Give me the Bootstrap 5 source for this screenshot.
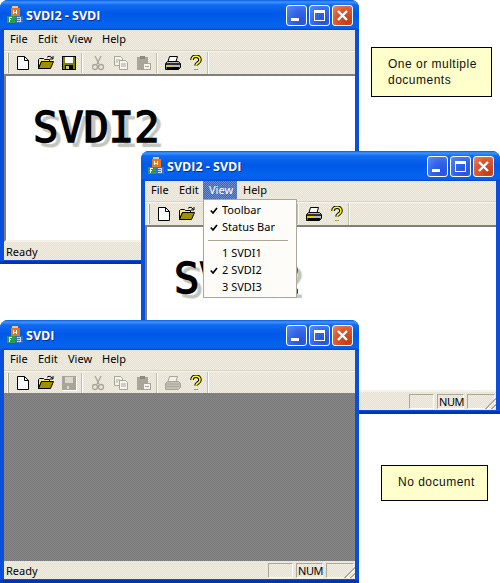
<!DOCTYPE html>
<html lang="en">
<head>
    <meta charset="UTF-8">
    <meta name="viewport" content="width=device-width, initial-scale=1.0">
    <title>SVDI</title>
    <link href="https://cdn.jsdelivr.net/npm/bootstrap@5.3.0/dist/css/bootstrap.min.css" rel="stylesheet">
    <style>
        body { background: #fff; margin: 0; font-family: "Noto Sans", "DejaVu Sans", sans-serif; font-size: 11px; color: #000; overflow: hidden; }
        .desk { width: 500px; height: 583px; }

        /* windows sit on a free canvas */
        .xp-win { width: 359px; height: 264px; background: #0a4fdc; border-radius: 8px 8px 0 0; box-shadow: inset 0 -3px 0 #0034b0; }
        .win-a { left: 0; top: 0; }
        .win-b { left: 141px; top: 151px; height: 263px; }
        .win-c { left: 0; top: 320px; height: 263px; }

        .xp-title { height: 30px; padding: 0 6px 0 6px; border-radius: 8px 8px 0 0; color: #fff;
            background: linear-gradient(180deg, #0a58e0 0, #3d95ff 2px, #0f6af0 5px, #0058e8 14px, #0263ee 24px, #0a5fe6 28px, #0046d0 30px); }
        .xp-title-text { font-family: "Open Sans", sans-serif; font-weight: 700; font-size: 12.5px; margin-left: 2px; padding-top: 2px; text-shadow: 1px 1px 0 #0a2f9c; }
        .cap-btn { width: 21px; height: 21px; margin-left: 2px; border: 1px solid #fff; border-radius: 3px;
            background: radial-gradient(circle at 75% 80%, #2a52d8, #2f63e8 45%, #5d8cf0 100%); }
        .cap-close { background: radial-gradient(circle at 75% 80%, #c43a12, #dc5a32 60%, #ea8a68 100%); }
        .cap-btn svg { display: block; }

        .xp-body { flex: 1 1 auto; min-height: 0; margin: 0 4px 4px; }
        .xp-face { background: repeating-conic-gradient(#e6e2d1 0 25%, #f0ede0 0 50%) 0 0 / 2px 2px; }
        .xp-menu { height: 20px; font-family: "Noto Sans", sans-serif; }
        .xp-menu span { padding: 0 6px; height: 20px; line-height: 18px; }
        .m-file { width: 28px; } .m-edit { width: 30px; } .m-view { width: 34px; }
        .xp-menu span.m-open { color: #fff; background: repeating-conic-gradient(#2f66c4 0 25%, #6f90d0 0 50%) 0 0 / 2px 2px; }
        .xp-rule { height: 2px; background: #f8f6ee; border-top: 1px solid #d6d2c2; }

        .xp-tools { height: 22px; padding-left: 3px; }
        .grip { width: 2px; height: 20px; margin-right: 2px; background: #fff; border-right: 1px solid #aca899; }
        .tool { width: 23px; height: 22px; }
        .tool-sep { width: 6px; height: 20px; position: relative; }
        .tool-sep::after { content: ""; display: block; width: 2px; height: 20px; margin-left: 1px; background: #c4c0b0; border-right: 1px solid #fff; }
        .tools-end { width: 2px; height: 22px; background: #c4c0b0; border-right: 1px solid #fff; }
        .tool-off { color: #a8a698; }

        .xp-client { flex: 1 1 auto; min-height: 0; background: #fff; border-top: 2px solid #808078; border-left: 2px solid #808078; border-bottom: 2px solid #f4f2e8; }
        .xp-mdi { flex: 1 1 auto; min-height: 0; margin-top: -1px; background: repeating-conic-gradient(#7a7a7a 0 25%, #868686 0 50%) 0 0 / 2px 2px; }
        .doc-word { left: 27px; top: 28px; font-family: "DejaVu Sans Mono", monospace; font-size: 42px; line-height: 48px; -webkit-text-stroke: 1.4px #000; text-shadow: 5px 5px 1px #c4c4be; white-space: nowrap; }

        .xp-status { height: 18px; padding-left: 2px; }
        .status-text { padding-top: 2px; }
        .pane { height: 15px; margin-right: 3px; line-height: 13px; border: 1px solid; border-color: #aca899 #fff #fff #aca899; padding-left: 1px; }
        .pane-a { width: 25px; } .pane-b { width: 27px; letter-spacing: -.4px; } .pane-c { width: 28px; margin-right: 1px; }
        .size-grip { right: 0; bottom: 1px; width: 13px; height: 13px;
            background: repeating-linear-gradient(135deg, transparent 0 2px, #aca899 2px 3.4px, #fff 3.4px 4.2px); clip-path: polygon(100% 0, 100% 100%, 0 100%); }

        /* open View menu */
        .xp-drop { left: 58px; top: 18px; width: 94px; min-width: 0; height: 99px; padding: 2px 1px; margin: 0; border: 1px solid #aca899; border-radius: 0; background: #fdfcf8; font-size: 11px; z-index: 5; }
        .xp-item { height: 17px; line-height: 16px; padding: 0 0 0 17px; position: relative; color: #000; font-size: 11px; }
        .xp-item svg { position: absolute; left: 5px; top: 5px; }
        .xp-line { height: 1px; margin: 4px 7px 4px 3px; background: #aca899; }

        /* notes */
        .xp-note { background: #ffffcc; border: 1px solid #000; font-family: "Liberation Sans", Arial, sans-serif; font-size: 12px; line-height: 16px; letter-spacing: .5px; color: #111; }
        .note-a { left: 371px; top: 47px; width: 121px; height: 50px; padding: 8px 0 0 16px; }
        .note-b { left: 381px; top: 465px; width: 107px; height: 36px; padding: 8px 0 0 16px; }
    </style>
</head>
<body>

<svg width="0" height="0" class="position-absolute">
    <defs>
        <symbol id="i-app" viewBox="0 0 18 18" shape-rendering="crispEdges">
            <rect x="6" y="0" width="6" height="2" fill="#e8c8a0"/>
            <rect x="5" y="2" width="9" height="8" fill="#e07820"/>
            <rect x="7" y="4" width="1" height="4" fill="#fff"/><rect x="10" y="4" width="1" height="4" fill="#fff"/><rect x="8" y="6" width="2" height="1" fill="#fff"/>
            <rect x="1" y="10" width="8" height="7" fill="#2f9a50"/>
            <rect x="3" y="11" width="3" height="1" fill="#fff"/><rect x="3" y="11" width="1" height="5" fill="#fff"/><rect x="3" y="13" width="2" height="1" fill="#fff"/>
            <rect x="9" y="10" width="8" height="7" fill="#3a70c8"/>
            <rect x="11" y="11" width="4" height="1" fill="#cfe0ff"/><rect x="11" y="13" width="4" height="1" fill="#cfe0ff"/><rect x="11" y="15" width="4" height="1" fill="#cfe0ff"/><rect x="14" y="11" width="1" height="5" fill="#cfe0ff"/>
        </symbol>
        <symbol id="i-new" viewBox="0 0 16 16">
            <path d="M2.5 1.5h7l4 4v9h-11z" fill="#fff" stroke="#000"/><path d="M9.5 1.5v4h4" fill="none" stroke="#000"/>
        </symbol>
        <symbol id="i-open" viewBox="0 0 16 16">
            <path d="M.5 13.5v-9l1-1h4l1 1h5v2h-8l-3 7z" fill="#ffe680" stroke="#000"/>
            <path d="M.5 13.5l3-7h12l-3 7z" fill="#a09000" stroke="#000"/>
            <path d="M9 2.5c1-1.500 3-1.500 4-.5l1.500 1.500M15 1v3h-3" fill="none" stroke="#000"/>
        </symbol>
        <symbol id="i-save" viewBox="0 0 16 16" shape-rendering="crispEdges">
            <path d="M1 1h14v14H1z" fill="#000"/><path d="M2 2h12v12H2z" fill="#808000"/>
            <path d="M4 2h8v6H4z" fill="#fff"/><path d="M4 10h8v5H4z" fill="#000"/><path d="M5 11h3v3H5z" fill="#c8c8a8"/>
        </symbol>
        <symbol id="i-save-off" viewBox="0 0 16 16" shape-rendering="crispEdges">
            <path d="M2 2h14v14H2z" fill="#fff"/><path d="M1 1h14v14H1z" fill="#a8a698"/>
            <path d="M4 2h8v6H4z" fill="#dcd9ca"/><path d="M6 11h2v3H6z" fill="#dcd9ca"/>
        </symbol>
        <symbol id="i-cut" viewBox="0 0 16 16">
            <path d="M5 1l4 8M11 1L7 9" fill="none" stroke="currentColor" stroke-width="1.300"/>
            <circle cx="5" cy="12" r="2.500" fill="none" stroke="currentColor" stroke-width="1.300"/>
            <circle cx="11" cy="12" r="2.500" fill="none" stroke="currentColor" stroke-width="1.300"/>
        </symbol>
        <symbol id="i-copy" viewBox="0 0 16 16">
            <path d="M1.500 1.500h6l2 2v7h-8z" fill="#f6f4ec" stroke="currentColor"/>
            <path d="M6.500 5.500h6l2 2v7h-8z" fill="#f6f4ec" stroke="currentColor"/>
            <path d="M3 5h4M3 7h2M8 9h5M8 11h5" stroke="currentColor"/>
        </symbol>
        <symbol id="i-paste" viewBox="0 0 16 16" shape-rendering="crispEdges">
            <path d="M1 2h11v13H1z" fill="currentColor"/><path d="M4 1h5v3H4z" fill="#8c8a7c"/>
            <path d="M7 8h8v7H7z" fill="#f6f4ec"/><path d="M7 8h8v1H7zM7 14h8v1H7zM7 8h1v7H7zM14 8h1v7h-1zM9 11h4v1H9z" fill="currentColor"/>
        </symbol>
        <symbol id="i-print" viewBox="0 0 16 16">
            <path d="M4.500 1.500h8l-1.500 5h-8z" fill="#fff" stroke="#000"/>
            <path d="M.5 8.500l2-2h11l2 2v4l-2 2h-13z" fill="#b8b8b8" stroke="#000"/>
            <path d="M1 9h14" stroke="#000" stroke-width="1.500"/><path d="M2 11h5" stroke="#e8d000" stroke-width="2"/>
            <path d="M1.500 13h13" stroke="#000" stroke-width="2"/>
        </symbol>
        <symbol id="i-print-off" viewBox="0 0 16 16">
            <path d="M4.500 1.500h8l-1.500 5h-8z" fill="#f4f2e8" stroke="#a8a698"/>
            <path d="M.5 8.500l2-2h11l2 2v4l-2 2h-13z" fill="#c4c2b4" stroke="#a8a698"/>
            <path d="M1 9h14M1.500 11.500h13" stroke="#a8a698"/>
        </symbol>
        <symbol id="i-help" viewBox="0 0 16 16">
            <path d="M4 5c0-5 8-5 8 0 0 3-4 3-4 5.500M8 14v.5" fill="none" stroke="#000" stroke-width="3.600"/>
            <path d="M4 5c0-5 8-5 8 0 0 3-4 3-4 5.500M8 14v.5" fill="none" stroke="#ffff00" stroke-width="1.600"/>
        </symbol>
        <symbol id="i-min" viewBox="0 0 19 19" shape-rendering="crispEdges"><rect x="4" y="12" width="8" height="3" fill="#fff"/></symbol>
        <symbol id="i-max" viewBox="0 0 19 19" shape-rendering="crispEdges"><path d="M4 4h11v11H4zM5 7v7h9V7z" fill="#fff" fill-rule="evenodd"/></symbol>
        <symbol id="i-close" viewBox="0 0 19 19"><path d="M5 5l9 9M14 5l-9 9" stroke="#fff" stroke-width="2.400" fill="none"/></symbol>
        <symbol id="i-check" viewBox="0 0 8 8"><path d="M.8 3.500l2.200 2.500L7 1" fill="none" stroke="#000" stroke-width="1.700"/></symbol>
    </defs>
</svg>

<div class="desk position-relative">

    <!-- first window -->
    <div class="xp-win win-a position-absolute d-flex flex-column">
        <div class="xp-title d-flex align-items-center">
            <svg width="18" height="18"><use href="#i-app"/></svg>
            <span class="xp-title-text flex-grow-1">SVDI2 - SVDI</span>
            <div class="cap-btn"><svg width="19" height="19"><use href="#i-min"/></svg></div>
            <div class="cap-btn"><svg width="19" height="19"><use href="#i-max"/></svg></div>
            <div class="cap-btn cap-close"><svg width="19" height="19"><use href="#i-close"/></svg></div>
        </div>
        <div class="xp-body d-flex flex-column xp-face">
            <div class="xp-menu d-flex"><span class="m-file">File</span><span class="m-edit">Edit</span><span class="m-view">View</span><span>Help</span></div>
            <div class="xp-rule"></div>
            <div class="xp-tools d-flex align-items-center">
                <div class="grip"></div>
                <div class="tool d-flex align-items-center justify-content-center"><svg width="16" height="16"><use href="#i-new"/></svg></div>
                <div class="tool d-flex align-items-center justify-content-center"><svg width="16" height="16"><use href="#i-open"/></svg></div>
                <div class="tool d-flex align-items-center justify-content-center"><svg width="16" height="16"><use href="#i-save"/></svg></div>
                <div class="tool-sep"></div>
                <div class="tool tool-off d-flex align-items-center justify-content-center"><svg width="16" height="16"><use href="#i-cut"/></svg></div>
                <div class="tool tool-off d-flex align-items-center justify-content-center"><svg width="16" height="16"><use href="#i-copy"/></svg></div>
                <div class="tool tool-off d-flex align-items-center justify-content-center"><svg width="16" height="16"><use href="#i-paste"/></svg></div>
                <div class="tool-sep"></div>
                <div class="tool d-flex align-items-center justify-content-center"><svg width="16" height="16"><use href="#i-print"/></svg></div>
                <div class="tool d-flex align-items-center justify-content-center"><svg width="16" height="16"><use href="#i-help"/></svg></div>
                <div class="tools-end"></div>
            </div>
            <div class="xp-client position-relative overflow-hidden"><div class="doc-word position-absolute">SVDI2</div></div>
            <div class="xp-status position-relative d-flex align-items-center">
                <span class="status-text flex-grow-1">Ready</span>
                <div class="pane pane-a"></div><div class="pane pane-b">NUM</div><div class="pane pane-c"></div>
                <div class="size-grip position-absolute"></div>
            </div>
        </div>
    </div>

    <!-- second window, with the View menu open -->
    <div class="xp-win win-b position-absolute d-flex flex-column">
        <div class="xp-title d-flex align-items-center">
            <svg width="18" height="18"><use href="#i-app"/></svg>
            <span class="xp-title-text flex-grow-1">SVDI2 - SVDI</span>
            <div class="cap-btn"><svg width="19" height="19"><use href="#i-min"/></svg></div>
            <div class="cap-btn"><svg width="19" height="19"><use href="#i-max"/></svg></div>
            <div class="cap-btn cap-close"><svg width="19" height="19"><use href="#i-close"/></svg></div>
        </div>
        <div class="xp-body d-flex flex-column xp-face position-relative">
            <div class="xp-menu d-flex"><span class="m-file">File</span><span class="m-edit">Edit</span><span class="m-view m-open">View</span><span>Help</span></div>
            <div class="xp-rule"></div>
            <div class="xp-tools d-flex align-items-center">
                <div class="grip"></div>
                <div class="tool d-flex align-items-center justify-content-center"><svg width="16" height="16"><use href="#i-new"/></svg></div>
                <div class="tool d-flex align-items-center justify-content-center"><svg width="16" height="16"><use href="#i-open"/></svg></div>
                <div class="tool d-flex align-items-center justify-content-center"><svg width="16" height="16"><use href="#i-save"/></svg></div>
                <div class="tool-sep"></div>
                <div class="tool tool-off d-flex align-items-center justify-content-center"><svg width="16" height="16"><use href="#i-cut"/></svg></div>
                <div class="tool tool-off d-flex align-items-center justify-content-center"><svg width="16" height="16"><use href="#i-copy"/></svg></div>
                <div class="tool tool-off d-flex align-items-center justify-content-center"><svg width="16" height="16"><use href="#i-paste"/></svg></div>
                <div class="tool-sep"></div>
                <div class="tool d-flex align-items-center justify-content-center"><svg width="16" height="16"><use href="#i-print"/></svg></div>
                <div class="tool d-flex align-items-center justify-content-center"><svg width="16" height="16"><use href="#i-help"/></svg></div>
                <div class="tools-end"></div>
            </div>
            <div class="xp-client position-relative overflow-hidden"><div class="doc-word position-absolute">SVDI2</div></div>
            <div class="xp-status position-relative d-flex align-items-center">
                <span class="status-text flex-grow-1">Ready</span>
                <div class="pane pane-a"></div><div class="pane pane-b">NUM</div><div class="pane pane-c"></div>
                <div class="size-grip position-absolute"></div>
            </div>
            <div class="dropdown-menu show xp-drop position-absolute">
                <div class="xp-item"><svg width="8" height="8"><use href="#i-check"/></svg>Toolbar</div>
                <div class="xp-item"><svg width="8" height="8"><use href="#i-check"/></svg>Status Bar</div>
                <div class="xp-line"></div>
                <div class="xp-item">1 SVDI1</div>
                <div class="xp-item"><svg width="8" height="8"><use href="#i-check"/></svg>2 SVDI2</div>
                <div class="xp-item">3 SVDI3</div>
            </div>
        </div>
    </div>

    <!-- third window, no document -->
    <div class="xp-win win-c position-absolute d-flex flex-column">
        <div class="xp-title d-flex align-items-center">
            <svg width="18" height="18"><use href="#i-app"/></svg>
            <span class="xp-title-text flex-grow-1">SVDI</span>
            <div class="cap-btn"><svg width="19" height="19"><use href="#i-min"/></svg></div>
            <div class="cap-btn"><svg width="19" height="19"><use href="#i-max"/></svg></div>
            <div class="cap-btn cap-close"><svg width="19" height="19"><use href="#i-close"/></svg></div>
        </div>
        <div class="xp-body d-flex flex-column xp-face">
            <div class="xp-menu d-flex"><span class="m-file">File</span><span class="m-edit">Edit</span><span class="m-view">View</span><span>Help</span></div>
            <div class="xp-rule"></div>
            <div class="xp-tools d-flex align-items-center">
                <div class="grip"></div>
                <div class="tool d-flex align-items-center justify-content-center"><svg width="16" height="16"><use href="#i-new"/></svg></div>
                <div class="tool d-flex align-items-center justify-content-center"><svg width="16" height="16"><use href="#i-open"/></svg></div>
                <div class="tool d-flex align-items-center justify-content-center"><svg width="16" height="16"><use href="#i-save-off"/></svg></div>
                <div class="tool-sep"></div>
                <div class="tool tool-off d-flex align-items-center justify-content-center"><svg width="16" height="16"><use href="#i-cut"/></svg></div>
                <div class="tool tool-off d-flex align-items-center justify-content-center"><svg width="16" height="16"><use href="#i-copy"/></svg></div>
                <div class="tool tool-off d-flex align-items-center justify-content-center"><svg width="16" height="16"><use href="#i-paste"/></svg></div>
                <div class="tool-sep"></div>
                <div class="tool d-flex align-items-center justify-content-center"><svg width="16" height="16"><use href="#i-print-off"/></svg></div>
                <div class="tool d-flex align-items-center justify-content-center"><svg width="16" height="16"><use href="#i-help"/></svg></div>
                <div class="tools-end"></div>
            </div>
            <div class="xp-mdi"></div>
            <div class="xp-status position-relative d-flex align-items-center">
                <span class="status-text flex-grow-1">Ready</span>
                <div class="pane pane-a"></div><div class="pane pane-b">NUM</div><div class="pane pane-c"></div>
                <div class="size-grip position-absolute"></div>
            </div>
        </div>
    </div>

    <div class="xp-note note-a position-absolute">One or multiple documents</div>
    <div class="xp-note note-b position-absolute">No document</div>
</div>

<script src="https://cdn.jsdelivr.net/npm/bootstrap@5.3.0/dist/js/bootstrap.bundle.min.js"></script>
</body>
</html>
